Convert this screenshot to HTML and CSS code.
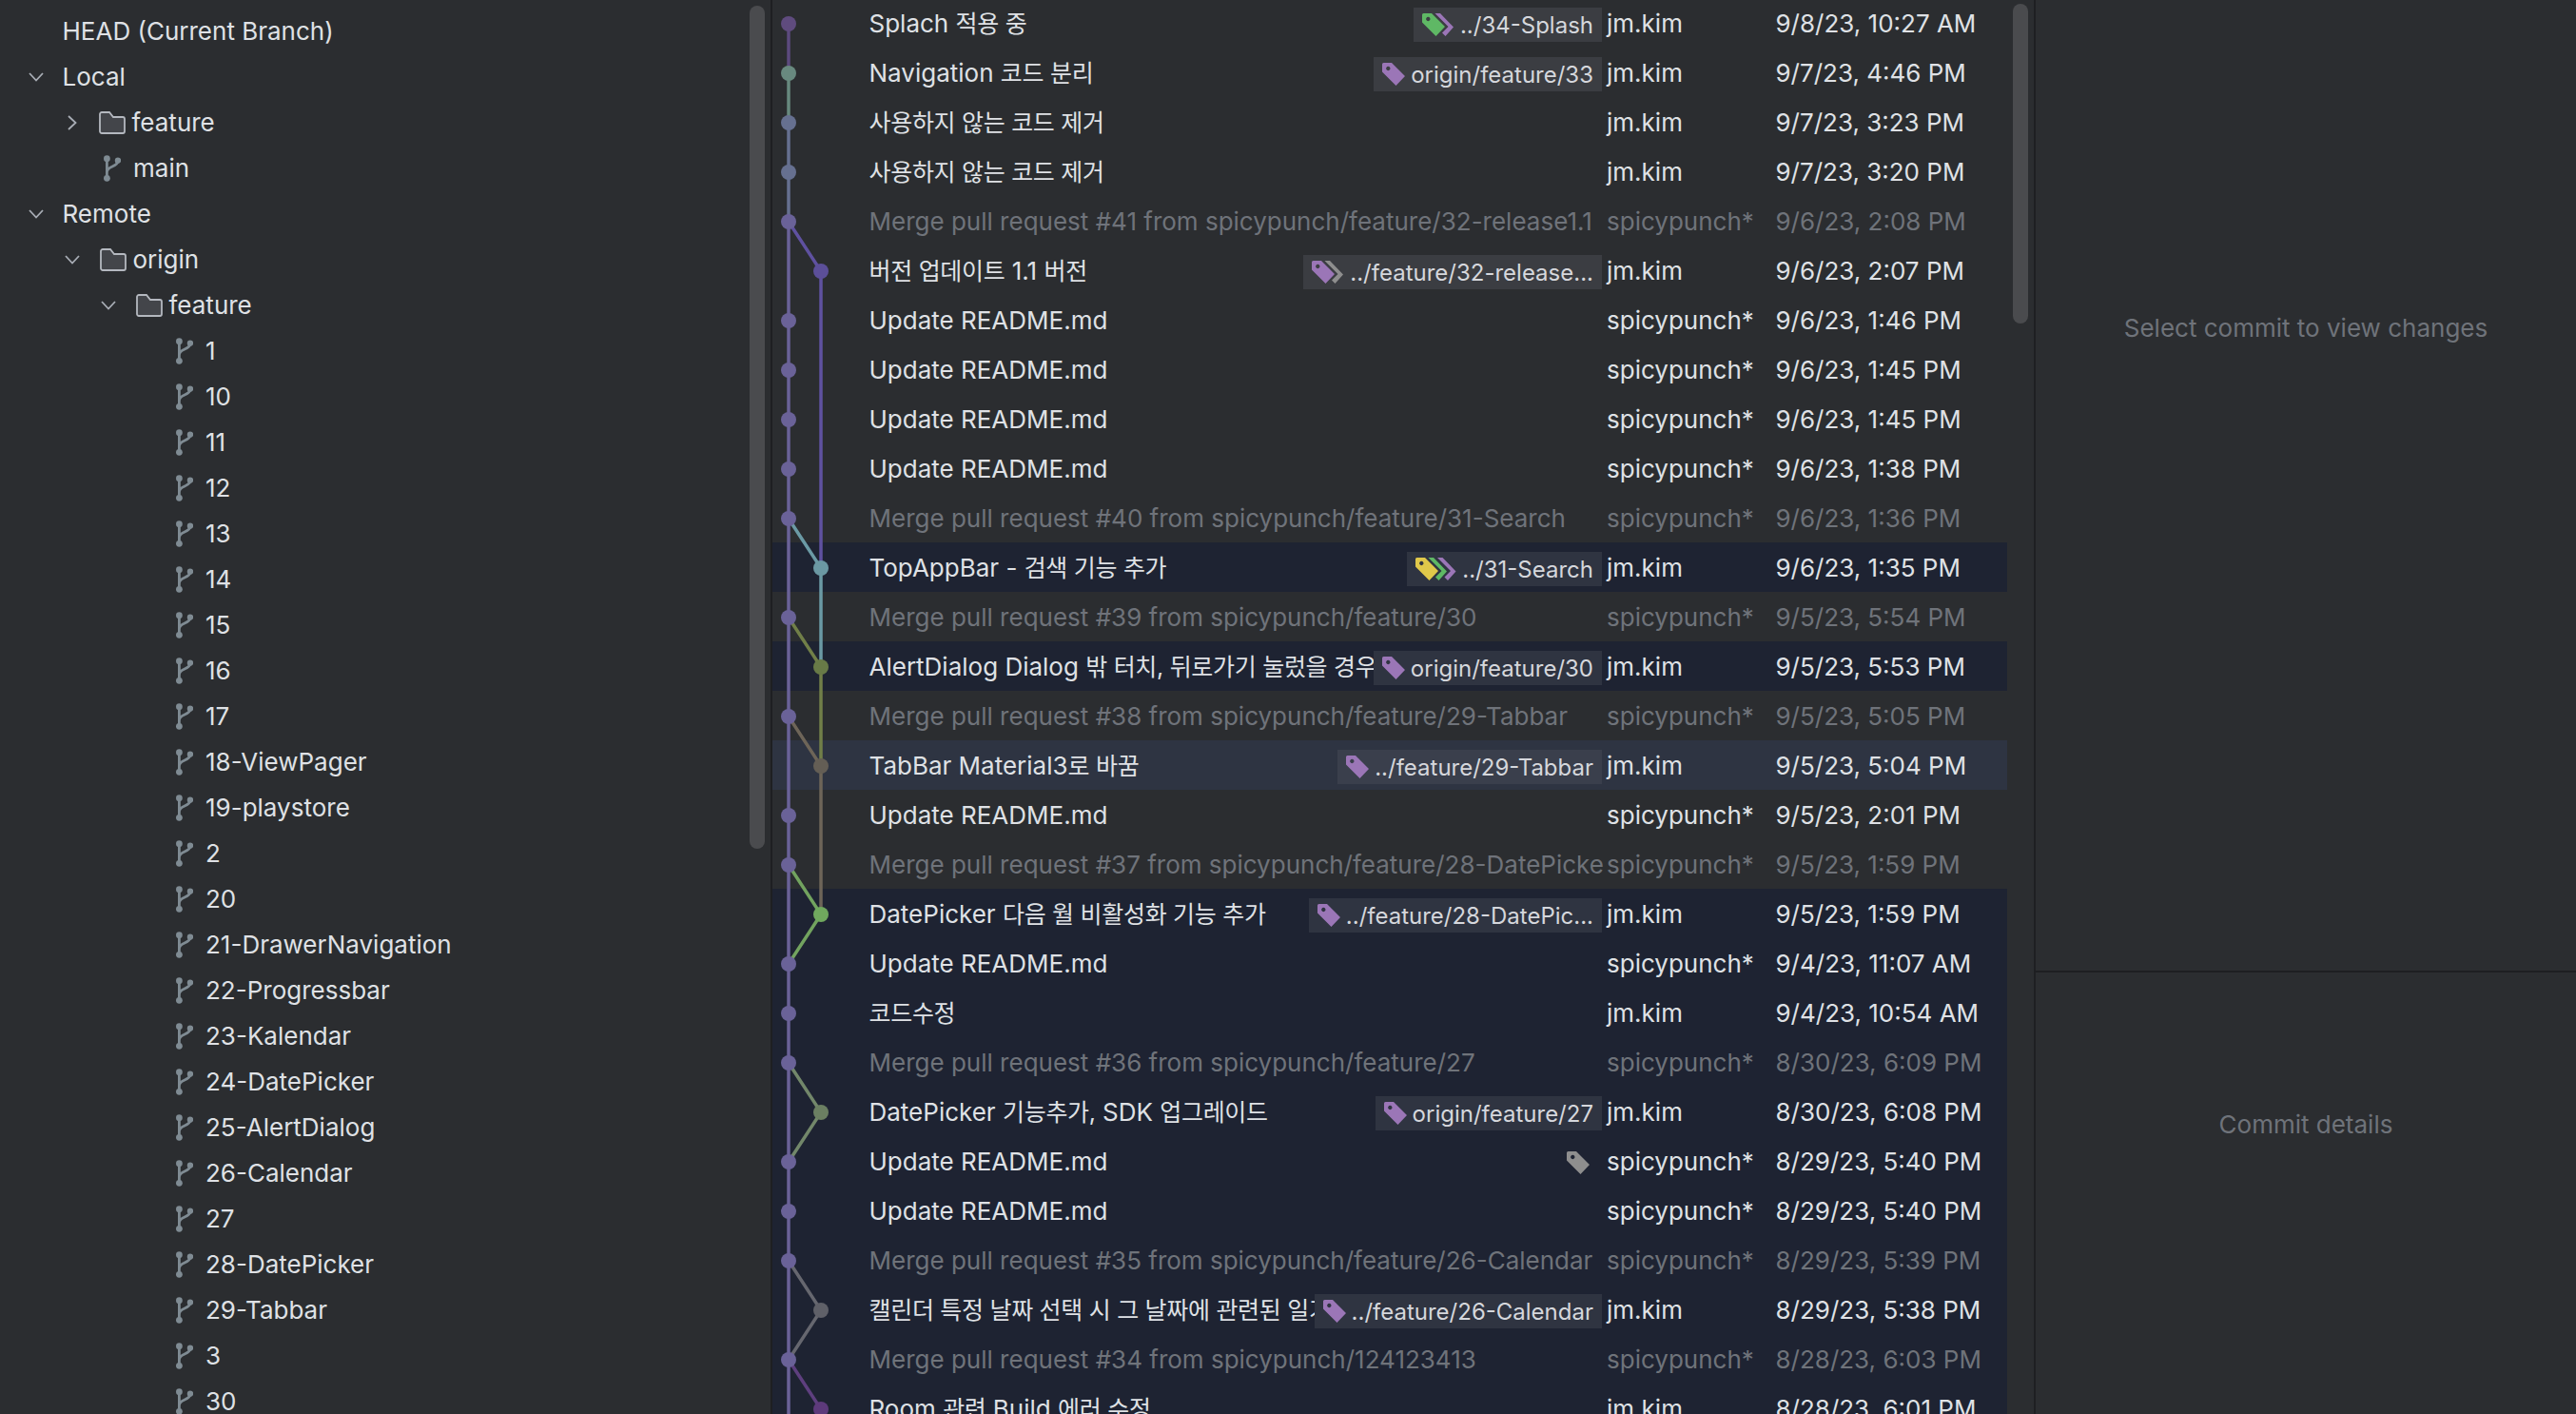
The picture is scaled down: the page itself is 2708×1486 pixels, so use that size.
FILE: index.html
```html
<!DOCTYPE html>
<html lang="ko">
<head>
<meta charset="utf-8">
<title>Git Log</title>
<link rel="stylesheet" href="styles.css">
</head>
<body>
<svg class="defs" width="0" height="0" aria-hidden="true">
  <defs>
    <symbol id="branch" viewBox="0 0 18 28">
      <path d="M3.400 3.700V24.300M15 5.700C15 13 3.400 11 3.400 18" fill="none" stroke="currentColor" stroke-width="2.800"/>
      <circle cx="3.400" cy="3.700" r="3.400" fill="currentColor"/>
      <circle cx="3.400" cy="24.300" r="3.400" fill="currentColor"/>
      <circle cx="15" cy="5.700" r="3.200" fill="currentColor"/>
    </symbol>
    <symbol id="folder" viewBox="0 0 28 24">
      <path d="M3 1H11L15 6H25A2 2 0 0 1 27 8V21A2 2 0 0 1 25 23H3A2 2 0 0 1 1 21V3A2 2 0 0 1 3 1Z" fill="#43454a" stroke="#b4b8bf" stroke-width="1.800"/>
    </symbol>
    <symbol id="open" viewBox="0 0 16 10"><path d="M1 1L8 8.500L15 1" fill="none" stroke="#a8adb5" stroke-width="1.800"/></symbol>
    <symbol id="closed" viewBox="0 0 10 16"><path d="M1 1L8.500 8L1 15" fill="none" stroke="#a8adb5" stroke-width="1.800"/></symbol>
    <path id="tag" fill-rule="evenodd" d="M1.500 0H10L24 14L14.500 24L0 9.500V1.500A1.500 1.500 0 0 1 1.500 0ZM6.300 3.800A2.200 2.200 0 1 0 6.301 3.800Z"/>
    <path id="chev" d="M0 0H5.500L19.500 14.500L11 24L7.500 20.500L14 14Z"/>
  </defs>
</svg>
<main class="app">
  <nav class="sidebar">
    <div class="tree-row"><span class="tree-gap lv0"></span><span class="tree-text">HEAD (Current Branch)</span></div>
    <div class="tree-row"><svg class="chev-open lv0c"><use href="#open"/></svg><span class="tree-text">Local</span></div>
    <div class="tree-row"><svg class="chev-closed lv1c"><use href="#closed"/></svg><svg class="folder"><use href="#folder"/></svg><span class="tree-text">feature</span></div>
    <div class="tree-row lv1b"><svg class="branch"><use href="#branch"/></svg><span class="tree-text">main</span></div>
    <div class="tree-row"><svg class="chev-open lv0c"><use href="#open"/></svg><span class="tree-text">Remote</span></div>
    <div class="tree-row"><svg class="chev-open lv1c"><use href="#open"/></svg><svg class="folder"><use href="#folder"/></svg><span class="tree-text">origin</span></div>
    <div class="tree-row"><svg class="chev-open lv2c"><use href="#open"/></svg><svg class="folder"><use href="#folder"/></svg><span class="tree-text">feature</span></div>
    <div class="tree-row lv3b"><svg class="branch"><use href="#branch"/></svg><span class="tree-text">1</span></div>
    <div class="tree-row lv3b"><svg class="branch"><use href="#branch"/></svg><span class="tree-text">10</span></div>
    <div class="tree-row lv3b"><svg class="branch"><use href="#branch"/></svg><span class="tree-text">11</span></div>
    <div class="tree-row lv3b"><svg class="branch"><use href="#branch"/></svg><span class="tree-text">12</span></div>
    <div class="tree-row lv3b"><svg class="branch"><use href="#branch"/></svg><span class="tree-text">13</span></div>
    <div class="tree-row lv3b"><svg class="branch"><use href="#branch"/></svg><span class="tree-text">14</span></div>
    <div class="tree-row lv3b"><svg class="branch"><use href="#branch"/></svg><span class="tree-text">15</span></div>
    <div class="tree-row lv3b"><svg class="branch"><use href="#branch"/></svg><span class="tree-text">16</span></div>
    <div class="tree-row lv3b"><svg class="branch"><use href="#branch"/></svg><span class="tree-text">17</span></div>
    <div class="tree-row lv3b"><svg class="branch"><use href="#branch"/></svg><span class="tree-text">18-ViewPager</span></div>
    <div class="tree-row lv3b"><svg class="branch"><use href="#branch"/></svg><span class="tree-text">19-playstore</span></div>
    <div class="tree-row lv3b"><svg class="branch"><use href="#branch"/></svg><span class="tree-text">2</span></div>
    <div class="tree-row lv3b"><svg class="branch"><use href="#branch"/></svg><span class="tree-text">20</span></div>
    <div class="tree-row lv3b"><svg class="branch"><use href="#branch"/></svg><span class="tree-text">21-DrawerNavigation</span></div>
    <div class="tree-row lv3b"><svg class="branch"><use href="#branch"/></svg><span class="tree-text">22-Progressbar</span></div>
    <div class="tree-row lv3b"><svg class="branch"><use href="#branch"/></svg><span class="tree-text">23-Kalendar</span></div>
    <div class="tree-row lv3b"><svg class="branch"><use href="#branch"/></svg><span class="tree-text">24-DatePicker</span></div>
    <div class="tree-row lv3b"><svg class="branch"><use href="#branch"/></svg><span class="tree-text">25-AlertDialog</span></div>
    <div class="tree-row lv3b"><svg class="branch"><use href="#branch"/></svg><span class="tree-text">26-Calendar</span></div>
    <div class="tree-row lv3b"><svg class="branch"><use href="#branch"/></svg><span class="tree-text">27</span></div>
    <div class="tree-row lv3b"><svg class="branch"><use href="#branch"/></svg><span class="tree-text">28-DatePicker</span></div>
    <div class="tree-row lv3b"><svg class="branch"><use href="#branch"/></svg><span class="tree-text">29-Tabbar</span></div>
    <div class="tree-row lv3b"><svg class="branch"><use href="#branch"/></svg><span class="tree-text">3</span></div>
    <div class="tree-row lv3b"><svg class="branch"><use href="#branch"/></svg><span class="tree-text">30</span></div>
    <div class="scroll-thumb side-thumb"></div>
  </nav>

  <section class="log">
    <svg class="graph" viewBox="0 0 80 1520" width="80" height="1520" aria-hidden="true">
      <g fill="none" stroke-width="3.500">
        <path stroke="#5c4a7e" d="M17 25V77"/>
        <path stroke="#67897e" d="M17 77V129"/>
        <path stroke="#667090" d="M17 129V233"/>
        <path stroke="#6a6298" d="M17 233V1520"/>
        <path stroke="#5f51a0" d="M17 233L51 285V597"/>
        <path stroke="#6b9aa5" d="M17 545L51 597V701"/>
        <path stroke="#717f48" d="M17 649L51 701V805"/>
        <path stroke="#6e6558" d="M17 753L51 805V961"/>
        <path stroke="#72a35f" d="M17 909L51 961L17 1013"/>
        <path stroke="#72876a" d="M17 1117L51 1169L17 1221"/>
        <path stroke="#66676f" d="M17 1325L51 1377L17 1429"/>
        <path stroke="#5e3f7f" d="M17 1429L51 1481"/>
      </g>
      <g>
        <circle class="d" cx="17" cy="25" fill="#5f4b7e"/>
        <circle class="d" cx="17" cy="77" fill="#68897f"/>
        <circle class="d" cx="17" cy="129" fill="#667090"/>
        <circle class="d" cx="17" cy="181" fill="#667090"/>
        <circle class="d" cx="17" cy="233" fill="#6a6298"/>
        <circle class="d" cx="51" cy="285" fill="#5c4f99"/>
        <circle class="d" cx="17" cy="337" fill="#6a6298"/>
        <circle class="d" cx="17" cy="389" fill="#6a6298"/>
        <circle class="d" cx="17" cy="441" fill="#6a6298"/>
        <circle class="d" cx="17" cy="493" fill="#6a6298"/>
        <circle class="d" cx="17" cy="545" fill="#6a6298"/>
        <circle class="d" cx="51" cy="597" fill="#6b98a3"/>
        <circle class="d" cx="17" cy="649" fill="#6a6298"/>
        <circle class="d" cx="51" cy="701" fill="#687a47"/>
        <circle class="d" cx="17" cy="753" fill="#6a6298"/>
        <circle class="d" cx="51" cy="805" fill="#645e55"/>
        <circle class="d" cx="17" cy="857" fill="#6a6298"/>
        <circle class="d" cx="17" cy="909" fill="#6a6298"/>
        <circle class="d" cx="51" cy="961" fill="#70a85e"/>
        <circle class="d" cx="17" cy="1013" fill="#6a6298"/>
        <circle class="d" cx="17" cy="1065" fill="#6a6298"/>
        <circle class="d" cx="17" cy="1117" fill="#6a6298"/>
        <circle class="d" cx="51" cy="1169" fill="#6b7f62"/>
        <circle class="d" cx="17" cy="1221" fill="#6a6298"/>
        <circle class="d" cx="17" cy="1273" fill="#6a6298"/>
        <circle class="d" cx="17" cy="1325" fill="#6a6298"/>
        <circle class="d" cx="51" cy="1377" fill="#5f6068"/>
        <circle class="d" cx="17" cy="1429" fill="#6a6298"/>
        <circle class="d" cx="51" cy="1481" fill="#5d3a7b"/>
      </g>
    </svg>

    <div class="row"><div class="subject"><span class="msg">Splach <span class="ko">적용 중</span></span><span class="chip"><svg class="tags t2"><use href="#chev" x="13.500" class="purple"/><use href="#tag" class="green"/></svg><span class="ref">../34-Splash</span></span></div><span class="author">jm.kim</span><span class="date">9/8/23, 10:27 AM</span></div>
    <div class="row"><div class="subject"><span class="msg">Navigation <span class="ko">코드 분리</span></span><span class="chip"><svg class="tags t1"><use href="#tag" class="purple"/></svg><span class="ref">origin/feature/33</span></span></div><span class="author">jm.kim</span><span class="date">9/7/23, 4:46 PM</span></div>
    <div class="row"><div class="subject"><span class="msg"><span class="ko">사용하지 않는 코드 제거</span></span></div><span class="author">jm.kim</span><span class="date">9/7/23, 3:23 PM</span></div>
    <div class="row"><div class="subject"><span class="msg"><span class="ko">사용하지 않는 코드 제거</span></span></div><span class="author">jm.kim</span><span class="date">9/7/23, 3:20 PM</span></div>
    <div class="row dim"><div class="subject"><span class="msg">Merge pull request #41 from spicypunch/feature/32-release1.1</span></div><span class="author">spicypunch*</span><span class="date">9/6/23, 2:08 PM</span></div>
    <div class="row"><div class="subject"><span class="msg"><span class="ko">버전 업데이트</span> 1.1 <span class="ko">버전</span></span><span class="chip"><svg class="tags t2"><use href="#chev" x="13.500" class="gray"/><use href="#tag" class="purple"/></svg><span class="ref">../feature/32-release...</span></span></div><span class="author">jm.kim</span><span class="date">9/6/23, 2:07 PM</span></div>
    <div class="row"><div class="subject"><span class="msg">Update README.md</span></div><span class="author">spicypunch*</span><span class="date">9/6/23, 1:46 PM</span></div>
    <div class="row"><div class="subject"><span class="msg">Update README.md</span></div><span class="author">spicypunch*</span><span class="date">9/6/23, 1:45 PM</span></div>
    <div class="row"><div class="subject"><span class="msg">Update README.md</span></div><span class="author">spicypunch*</span><span class="date">9/6/23, 1:45 PM</span></div>
    <div class="row"><div class="subject"><span class="msg">Update README.md</span></div><span class="author">spicypunch*</span><span class="date">9/6/23, 1:38 PM</span></div>
    <div class="row dim"><div class="subject"><span class="msg">Merge pull request #40 from spicypunch/feature/31-Search</span></div><span class="author">spicypunch*</span><span class="date">9/6/23, 1:36 PM</span></div>
    <div class="row sel"><div class="subject"><span class="msg">TopAppBar - <span class="ko">검색 기능 추가</span></span><span class="chip"><svg class="tags t3"><use href="#chev" x="23" class="purple"/><use href="#chev" x="13.500" class="green"/><use href="#tag" class="yellow"/></svg><span class="ref">../31-Search</span></span></div><span class="author">jm.kim</span><span class="date">9/6/23, 1:35 PM</span></div>
    <div class="row dim"><div class="subject"><span class="msg">Merge pull request #39 from spicypunch/feature/30</span></div><span class="author">spicypunch*</span><span class="date">9/5/23, 5:54 PM</span></div>
    <div class="row sel"><div class="subject"><span class="msg">AlertDialog Dialog <span class="ko">밖 터치, 뒤로가기 눌렀을 경우</span></span><span class="chip"><svg class="tags t1"><use href="#tag" class="purple"/></svg><span class="ref">origin/feature/30</span></span></div><span class="author">jm.kim</span><span class="date">9/5/23, 5:53 PM</span></div>
    <div class="row dim"><div class="subject"><span class="msg">Merge pull request #38 from spicypunch/feature/29-Tabbar</span></div><span class="author">spicypunch*</span><span class="date">9/5/23, 5:05 PM</span></div>
    <div class="row hover"><div class="subject"><span class="msg">TabBar Material3<span class="ko">로 바꿈</span></span><span class="chip"><svg class="tags t1"><use href="#tag" class="purple"/></svg><span class="ref">../feature/29-Tabbar</span></span></div><span class="author">jm.kim</span><span class="date">9/5/23, 5:04 PM</span></div>
    <div class="row"><div class="subject"><span class="msg">Update README.md</span></div><span class="author">spicypunch*</span><span class="date">9/5/23, 2:01 PM</span></div>
    <div class="row dim"><div class="subject"><span class="msg">Merge pull request #37 from spicypunch/feature/28-DatePicker</span></div><span class="author">spicypunch*</span><span class="date">9/5/23, 1:59 PM</span></div>
    <div class="row sel"><div class="subject"><span class="msg">DatePicker <span class="ko">다음 월 비활성화 기능 추가</span></span><span class="chip"><svg class="tags t1"><use href="#tag" class="purple"/></svg><span class="ref">../feature/28-DatePic...</span></span></div><span class="author">jm.kim</span><span class="date">9/5/23, 1:59 PM</span></div>
    <div class="row sel"><div class="subject"><span class="msg">Update README.md</span></div><span class="author">spicypunch*</span><span class="date">9/4/23, 11:07 AM</span></div>
    <div class="row sel"><div class="subject"><span class="msg"><span class="ko">코드수정</span></span></div><span class="author">jm.kim</span><span class="date">9/4/23, 10:54 AM</span></div>
    <div class="row sel dim"><div class="subject"><span class="msg">Merge pull request #36 from spicypunch/feature/27</span></div><span class="author">spicypunch*</span><span class="date">8/30/23, 6:09 PM</span></div>
    <div class="row sel"><div class="subject"><span class="msg">DatePicker <span class="ko">기능추가,</span> SDK <span class="ko">업그레이드</span></span><span class="chip"><svg class="tags t1"><use href="#tag" class="purple"/></svg><span class="ref">origin/feature/27</span></span></div><span class="author">jm.kim</span><span class="date">8/30/23, 6:08 PM</span></div>
    <div class="row sel"><div class="subject"><span class="msg">Update README.md</span><span class="chip bare"><svg class="tags t1"><use href="#tag" class="gray"/></svg></span></div><span class="author">spicypunch*</span><span class="date">8/29/23, 5:40 PM</span></div>
    <div class="row sel"><div class="subject"><span class="msg">Update README.md</span></div><span class="author">spicypunch*</span><span class="date">8/29/23, 5:40 PM</span></div>
    <div class="row sel dim"><div class="subject"><span class="msg">Merge pull request #35 from spicypunch/feature/26-Calendar</span></div><span class="author">spicypunch*</span><span class="date">8/29/23, 5:39 PM</span></div>
    <div class="row sel"><div class="subject"><span class="msg"><span class="ko">캘린더 특정 날짜 선택 시 그 날짜에 관련된 일기 표시</span></span><span class="chip"><svg class="tags t1"><use href="#tag" class="purple"/></svg><span class="ref">../feature/26-Calendar</span></span></div><span class="author">jm.kim</span><span class="date">8/29/23, 5:38 PM</span></div>
    <div class="row sel dim"><div class="subject"><span class="msg">Merge pull request #34 from spicypunch/124123413</span></div><span class="author">spicypunch*</span><span class="date">8/28/23, 6:03 PM</span></div>
    <div class="row sel"><div class="subject"><span class="msg">Room <span class="ko">관련</span> Build <span class="ko">에러 수정</span></span></div><span class="author">jm.kim</span><span class="date">8/28/23, 6:01 PM</span></div>
    <div class="scroll-thumb log-thumb"></div>
  </section>

  <aside class="details">
    <div class="pane pane-top"><span class="hint">Select commit to view changes</span></div>
    <div class="pane pane-bottom"><span class="hint">Commit details</span></div>
  </aside>
</main>
</body>
</html>
```

FILE: styles.css
```css
* { box-sizing: border-box; }
html, body { margin: 0; height: 100%; overflow: hidden; background: #2b2d30; }
body { font-family: Inter, "Noto Sans CJK KR", sans-serif; font-size: 26px; color: #dfe1e5; }
.defs { position: absolute; }

.app { display: flex; height: 1486px; overflow: hidden; }

/* sidebar tree */
.sidebar { position: relative; flex: none; width: 812px; padding-top: 9px; border-right: 2px solid #1e1f22; overflow: hidden; }
.tree-row { display: flex; align-items: center; height: 48px; white-space: nowrap; }
.tree-text { line-height: 48px; }
.tree-gap.lv0 { width: 65.5px; }
.lv1b { padding-left: 109px; }
.lv3b { padding-left: 185px; }
.branch { flex: none; width: 18px; height: 28px; margin-right: 13px; color: #7f8b93; }
.folder { flex: none; width: 28px; height: 24px; margin-right: 6.5px; }
.chev-open { flex: none; width: 16px; height: 10px; }
.chev-closed { flex: none; width: 10px; height: 16px; }
.lv0c { margin: 0 19.5px 0 30px; }
.lv1c.chev-open { margin: 0 21px 0 68px; }
.lv1c.chev-closed { margin: 0 23px 0 71px; }
.lv2c { margin: 0 21px 0 106px; }

.scroll-thumb { position: absolute; width: 16px; background: #4a4b4e; border-radius: 8px; }
.side-thumb { left: 788px; top: 6px; height: 886px; }
.log-thumb { left: 1304px; top: 6px; height: 336px; }

/* commit log */
.log { position: relative; flex: none; width: 1326px; margin-top: -2px; overflow: hidden; height: 1488px; }
.graph { position: absolute; left: 0; top: 2px; }
.d { r: 8px; }
.row { display: flex; align-items: center; width: 1298px; height: 52px; padding: 2px 0 0 101.5px; white-space: nowrap; }
.subject { flex: none; display: flex; align-items: center; width: 772.5px; height: 38px; overflow: hidden; }
.msg { flex: 1 1 0; min-width: 0; overflow: hidden; line-height: 36px; }
.ko { font-size: 25px; letter-spacing: -0.3px; }
.author { flex: none; width: 180.5px; padding-left: 3px; line-height: 36px; }
.date { flex: none; line-height: 36px; }
.dim { color: #6f737a; }
.sel { background: #1e2332; }
.hover { background: #2e3442; }

/* ref chips */
.chip { flex: none; display: flex; align-items: center; gap: 6px; height: 36px; margin: 2px 2px 0 0; padding: 0 9px; background: #3b3d42; color: #d5d7dc; font-size: 24px; }
.sel .chip { background: #2f3441; }
.hover .chip { background: #3a3f4c; }
.chip.bare { background: none; padding-right: 13px; }
.tags { flex: none; height: 24px; }
.t1 { width: 24px; }
.t2 { width: 34px; }
.t3 { width: 43px; }
.purple { fill: #9b76b7; }
.green { fill: #5fb865; }
.yellow { fill: #e0c84a; }
.gray { fill: #8e8e8e; }

/* right details */
.details { flex: 1; display: flex; flex-direction: column; border-left: 2px solid #1e1f22; }
.pane { display: flex; justify-content: center; }
.pane-top { height: 1022px; padding-top: 329px; border-bottom: 2px solid #1e1f22; }
.pane-bottom { flex: 1; padding-top: 144px; }
.hint { color: #6f737a; line-height: 32px; }
```
